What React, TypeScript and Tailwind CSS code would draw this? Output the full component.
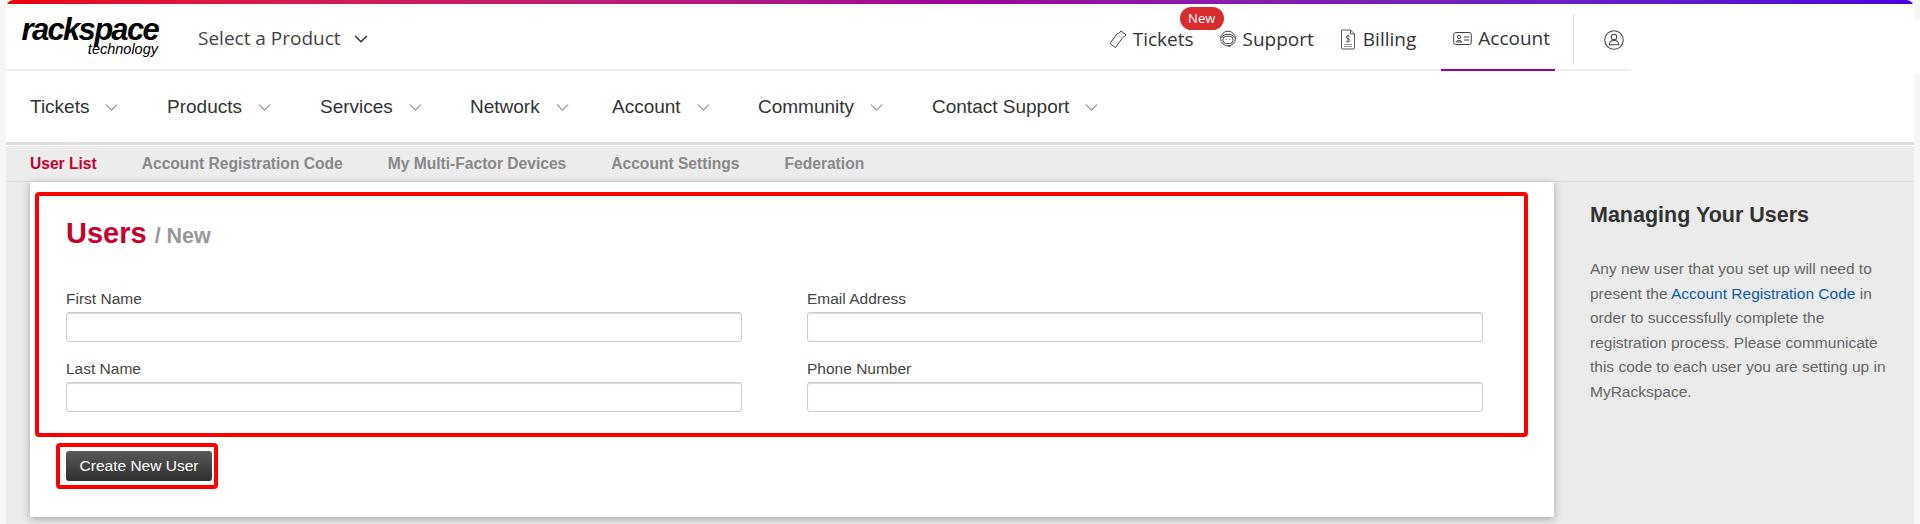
import { ChevronDown } from 'lucide-react';

const mainNav = [
  { label: 'Tickets', w: 'w-[137px]' },
  { label: 'Products', w: 'w-[153px]' },
  { label: 'Services', w: 'w-[150px]' },
  { label: 'Network', w: 'w-[142px]' },
  { label: 'Account', w: 'w-[146px]' },
  { label: 'Community', w: 'w-[174px]' },
  { label: 'Contact Support', w: 'w-[200px]' },
];

const subNav = ['Account Registration Code', 'My Multi-Factor Devices', 'Account Settings', 'Federation'];

function TicketIcon() {
  return (
    <svg width="18" height="19" viewBox="0 0 18 19" fill="none" stroke="#444" strokeWidth="1" strokeLinejoin="round">
      <path d="M12 1 L17 4.8 L15.4 7 C14.6 6.7 13.9 7 13.6 7.7 L6.4 17.6 L1 13.6 L8.2 3.6 C9 4 9.8 3.7 10.2 3 Z" />
      <path d="M10.6 6.4 L12.2 7.8" strokeDasharray="1 1" />
    </svg>
  );
}

function HeadsetIcon() {
  return (
    <svg width="18" height="18" viewBox="0 0 20 20" fill="none" stroke="#444" strokeWidth="1.1">
      <circle cx="10" cy="9.5" r="8.2" />
      <path d="M2.5 9 C4 5.5 7 4.8 10 4.8 C13 4.8 16 5.5 17.5 9" />
      <rect x="4.5" y="7" width="11" height="8" rx="3.5" />
      <path d="M8 10v1M12 10v1" />
      <path d="M10 18 h3" />
    </svg>
  );
}

function BillIcon() {
  return (
    <svg width="16" height="21" viewBox="0 0 16 21" fill="none" stroke="#555" strokeWidth="1">
      <path d="M1.5 1 H10.5 L14.5 5 V19.2 C14.5 19.7 14.2 20 13.7 20 H2.3 C1.8 20 1.5 19.7 1.5 19.2 Z" strokeLinejoin="round" />
      <path d="M10.5 1 V5 H14.5" />
      <path d="M9.8 7.2 C9 6.3 6.4 6.3 6.2 8 C6 9.8 10 9.5 9.9 11.4 C9.8 13 7 13 6 12 M8 5.6 V13.8" strokeWidth="0.9" />
      <path d="M4 15.5 H12 M4 17.5 H12" stroke="#999" />
    </svg>
  );
}

function IdCardIcon() {
  return (
    <svg width="19" height="15" viewBox="0 0 19 15" fill="none" stroke="#444" strokeWidth="1">
      <rect x="0.7" y="1.5" width="17.6" height="12" rx="2" />
      <circle cx="6" cy="6" r="1.6" />
      <path d="M3.2 11 C3.4 8.8 8.6 8.8 8.8 11 Z" />
      <path d="M11 6 H16 M11 9 H16" />
    </svg>
  );
}

function UserCircleIcon() {
  return (
    <svg width="20" height="20" viewBox="0 0 19 19" fill="none" stroke="#444" strokeWidth="1">
      <circle cx="9.5" cy="9.5" r="8.8" />
      <circle cx="9.5" cy="6.6" r="2.6" />
      <path d="M5 14 C5 11.3 6.8 10 9.5 10 C12.2 10 14 11.3 14 14 Z" />
    </svg>
  );
}

function Field({ label }: { label: string }) {
  return (
    <div className="flex flex-col">
      <label className="text-[15.5px] leading-[20px] text-[#444]">{label}</label>
      <input className="mt-[3px] h-[30px] w-full rounded-[3px] border border-[#ccc] bg-white shadow-[inset_0_1px_1px_rgba(0,0,0,0.15)]" />
    </div>
  );
}

function TopLink({ icon, label, gap }: { icon: React.ReactNode; label: string; gap: string }) {
  return (
    <div className={`flex h-full items-center pt-[3px] ${gap}`}>
      {icon}
      <span className="font-['Open_Sans',sans-serif] text-[19px] text-[#333]">{label}</span>
    </div>
  );
}

export default function App() {
  return (
    <div className="relative flex h-[524px] w-[1920px] overflow-hidden bg-[#f6f6f6] font-['Liberation_Sans',sans-serif]">
      <div className="w-[6px] shrink-0" />
      <div className="flex w-[1908px] flex-col overflow-hidden rounded-t-[8px] bg-white">
        <div className="h-[4px] shrink-0 bg-linear-to-r from-[#ee0000] via-[#a0009a] to-[#4a00e0]" />

        {/* product header */}
        <div className="flex h-[67px] w-[1625px] shrink-0 items-center border-b-2 border-[#eeeeee]">
          <div className="ml-[16px] flex w-[136px] flex-col items-end leading-none text-black">
            <span className="text-[31px] font-bold italic leading-[26px] tracking-[-1.7px]">rackspace</span>
            <span className="text-[14.5px] italic leading-[13px]">technology</span>
          </div>
          <div className="ml-[40px] flex items-center gap-[9px] pt-[4px] font-['Open_Sans',sans-serif] text-[19px] text-[#444]">
            Select a Product
            <ChevronDown size={22} strokeWidth={1.6} className="text-[#333]" />
          </div>
          <div className="ml-auto mr-[7px] flex h-[67px] items-stretch self-start">
            <div className="relative mr-[25px]">
              <TopLink icon={<TicketIcon />} label="Tickets" gap="gap-[6px]" />
              <span className="absolute left-[71px] top-[3px] h-[23px] w-[44px] rounded-full bg-[#d92d2d] text-center font-['Open_Sans',sans-serif] text-[13px] leading-[22px] text-white">New</span>
            </div>
            <div className="mr-[26px]">
              <TopLink icon={<HeadsetIcon />} label="Support" gap="gap-[6px]" />
            </div>
            <div className="mr-[25px]">
              <TopLink icon={<BillIcon />} label="Billing" gap="gap-[7px]" />
            </div>
            <div className="border-b-2 border-[#99058f] pl-[12px] pr-[5px]">
              <TopLink icon={<IdCardIcon />} label="Account" gap="gap-[6px]" />
            </div>
            <div className="ml-[18px] mt-[10px] h-[51px] w-px bg-[#ddd]" />
            <div className="ml-[30px] flex items-center pt-[4px]">
              <UserCircleIcon />
            </div>
          </div>
        </div>

        {/* main nav */}
        <div className="flex h-[71px] shrink-0 items-center pl-[24px] pt-[2px]">
          {mainNav.map((item) => (
            <div key={item.label} className={`flex items-center gap-[12px] text-[19px] text-[#333] ${item.w}`}>
              {item.label}
              <ChevronDown size={21} strokeWidth={1.5} className="text-[#999]" />
            </div>
          ))}
        </div>

        {/* sub nav */}
        <div className="h-[40px] shrink-0 border-t-[3px] border-[#dcdcdc] bg-white pt-px">
          <div className="flex h-[36px] items-center gap-[45px] border-b border-[#dddddd] bg-[#ececec] pl-[24px] text-[15.6px] font-bold text-[#888]">
            <span className="text-[#c8002d]">User List</span>
            {subNav.map((s) => (
              <span key={s}>{s}</span>
            ))}
          </div>
        </div>

        <div className="flex min-h-0 flex-1 bg-[#ebebeb] pl-[24px]">
          <div className="h-[335px] w-[1524px] shrink-0 bg-white px-[5px] pt-[10px] shadow-[0_2px_8px_rgba(0,0,0,0.3)]">
            <div className="h-[245px] w-[1493px] rounded-[4px] border-4 border-[#ff0000] px-[27px] pt-[16px]">
              <div className="flex items-baseline gap-[8px] font-bold">
                <span className="text-[29px] text-[#c8002d]">Users</span>
                <span className="text-[21.5px] text-[#999]">/ New</span>
              </div>
              <div className="mt-[33px] grid grid-cols-[676px_676px] gap-x-[65px] gap-y-[17px]">
                <Field label="First Name" />
                <Field label="Email Address" />
                <Field label="Last Name" />
                <Field label="Phone Number" />
              </div>
            </div>
            <div className="ml-[21px] mt-[6px] w-fit rounded-[4px] border-4 border-[#ff0000] py-[4px] pl-[6px] pr-[2px]">
              <button className="block h-[30px] w-[146px] rounded-[3px] bg-linear-to-b from-[#5a5a5a] to-[#2f2f2f] text-[15.5px] text-white">Create New User</button>
            </div>
          </div>
          <div className="flex-1 pl-[36px] pr-[24px] pt-[20px]">
            <h2 className="text-[21.5px] font-bold leading-[26px] text-[#333]">Managing Your Users</h2>
            <p className="mt-[29px] text-[15.5px] leading-[24.5px] text-[#666]">
              Any new user that you set up will need to present the <a className="text-[#0b5cab]">Account Registration Code</a> in order to successfully complete the registration process. Please communicate this code to each user you are setting up in MyRackspace.
            </p>
          </div>
        </div>
      </div>
      <div className="w-[6px] shrink-0" />
      <div className="absolute right-0 top-[20px] h-[54px] w-[6px] rounded-br-[4px] bg-white" />
    </div>
  );
}
